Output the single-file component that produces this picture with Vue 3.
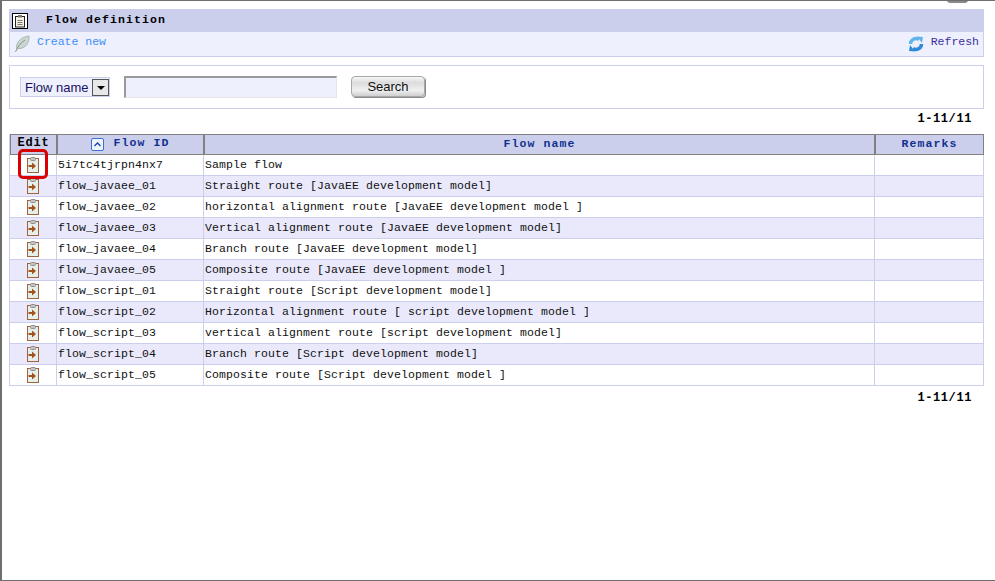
<script setup>
const rows = [
  ['5i7tc4tjrpn4nx7', 'Sample flow'],
  ['flow_javaee_01', 'Straight route [JavaEE development model]'],
  ['flow_javaee_02', 'horizontal alignment route [JavaEE development model ]'],
  ['flow_javaee_03', 'Vertical alignment route [JavaEE development model]'],
  ['flow_javaee_04', 'Branch route [JavaEE development model]'],
  ['flow_javaee_05', 'Composite route [JavaEE development model ]'],
  ['flow_script_01', 'Straight route [Script development model]'],
  ['flow_script_02', 'Horizontal alignment route [ script development model ]'],
  ['flow_script_03', 'vertical alignment route [script development model]'],
  ['flow_script_04', 'Branch route [Script development model]'],
  ['flow_script_05', 'Composite route [Script development model ]'],
]
</script>

<template>
  <div class="page">
    <div class="notch"></div>
    <div class="panel">
      <div class="title">
        <span class="title-icon">
          <svg width="14" height="14" viewBox="0 0 14 14">
            <rect x="2.500" y="2.500" width="9" height="10.500" fill="#f6f2e2" stroke="#222" />
            <rect x="5" y="1" width="4" height="2.500" fill="#777" />
            <path d="M4.500 6.500h5M4.500 8.500h5M4.500 10.500h5" stroke="#777" />
          </svg>
        </span>
        <span class="title-text">Flow definition</span>
      </div>
      <div class="toolbar">
        <a class="tool">
          <svg width="16" height="18" viewBox="0 0 16 18">
            <path d="M3 14C1.500 9 5 2.500 15 1c.5 6-3 12-9 12.500-1 .1-2 .2-3 .5z" fill="#ccd6d0" stroke="#a3b3a9" stroke-width=".9" />
            <path d="M1.500 17C3 13 6 8 11 5" stroke="#84968b" fill="none" stroke-width="1" />
          </svg>
          <span class="create">Create new</span>
        </a>
        <a class="tool">
          <svg width="16" height="16" viewBox="0 0 16 16">
            <path d="M2.500 8A5.500 5.500 0 0 1 11 3.500" fill="none" stroke="#62b4ea" stroke-width="3.500" />
            <path d="M9 .5L15 1l-1 6z" fill="#62b4ea" />
            <path d="M13.500 8A5.500 5.500 0 0 1 5 12.500" fill="none" stroke="#2e8ad8" stroke-width="3.500" />
            <path d="M7 15.500L1 15l1-6z" fill="#2e8ad8" />
          </svg>
          <span class="refresh">Refresh</span>
        </a>
      </div>
    </div>

    <div class="search">
      <div class="select">
        <span>Flow name</span>
        <span class="arrow"></span>
      </div>
      <input class="input" type="text" />
      <button class="btn" type="button">Search</button>
    </div>

    <div class="pager">1-11/11</div>

    <div class="table-wrap">
      <table class="grid">
        <colgroup>
          <col class="c1" />
          <col class="c2" />
          <col />
          <col class="c4" />
        </colgroup>
        <thead>
          <tr>
            <th class="edit-h">Edit</th>
            <th class="blue">
              <span class="sort">
                <svg width="9" height="9" viewBox="0 0 9 9"><path d="M1.500 6L4.500 3l3 3" fill="none" stroke="#1a3fa8" stroke-width="1.300" /></svg>
              </span>Flow ID
            </th>
            <th class="blue">Flow name</th>
            <th class="blue">Remarks</th>
          </tr>
        </thead>
        <tbody>
          <tr v-for="(r, i) in rows" :key="r[0]" :class="{ alt: i % 2 === 1 }">
            <td class="icon-cell">
              <svg class="clip" width="12" height="16" viewBox="0 0 12 16">
                <rect x=".5" y="1.500" width="11" height="14" fill="#e6efe9" stroke="#a0623a" />
                <rect x="3.500" y=".5" width="5" height="3" rx="1" fill="#c4c4c4" stroke="#8f8f8f" />
                <path d="M1.500 8h3.500V5.500L9 9l-4 3.500V10H1.500z" fill="#a4521c" />
              </svg>
            </td>
            <td>{{ r[0] }}</td>
            <td>{{ r[1] }}</td>
            <td></td>
          </tr>
        </tbody>
      </table>
      <div class="mark"></div>
    </div>

    <div class="pager bottom">1-11/11</div>
  </div>
</template>

<style scoped>
.page {
  position: relative;
  box-sizing: border-box;
  height: 581px;
  width: 995px;
  overflow: hidden;
  background: #fff;
  border-top: 1px solid #6f6f6f;
  border-left: 2px solid #6f6f6f;
  border-bottom: 1px solid #6f6f6f;
  padding: 8px 11px 0 7px;
  font-family: "Liberation Mono", "DejaVu Sans Mono", monospace;
  font-size: 11.500px;
  color: #111;
}
.notch {
  position: absolute;
  top: -1px;
  left: 945px;
  width: 21px;
  height: 3px;
  border-radius: 0 0 10px 10px;
  background: #8a8a8a;
}
.panel {
  border: 1px solid #cbcfeb;
  border-top: 0;
}
.title {
  height: 23px;
  background: #cbcfeb;
  display: flex;
  align-items: center;
  margin: 0 -1px;
  padding-left: 3px;
}
.title-icon {
  flex: none;
  width: 14px;
  height: 14px;
  border: 1px solid #000;
  background: #fff;
  display: flex;
  align-items: center;
  justify-content: center;
}
.title-text {
  margin-left: 18px;
  margin-bottom: 2px;
  font-weight: bold;
  letter-spacing: 1.100px;
  color: #000;
}
.toolbar {
  height: 24px;
  background: #eef0fe;
  display: flex;
  justify-content: space-between;
  align-items: center;
  padding: 0 4px 0 4px;
}
.tool {
  display: flex;
  align-items: center;
  gap: 7px;
}
.create {
  color: #3f8ff5;
  position: relative;
  top: -3px;
}
.refresh {
  color: #3d2f9a;
  position: relative;
  top: -3px;
}
.search {
  margin-top: 8px;
  height: 42px;
  border: 1px solid #cbcfeb;
  display: flex;
  align-items: center;
  padding: 0 0 0 10px;
  font-family: "Liberation Sans", Arial, sans-serif;
  font-size: 13px;
}
.select {
  box-sizing: border-box;
  width: 90px;
  height: 20px;
  border: 1px solid #cbcfeb;
  background: #eef0fe;
  display: flex;
  align-items: center;
  justify-content: space-between;
  padding: 0 0 0 4px;
  color: #1a1060;
  white-space: nowrap;
}
.arrow {
  box-sizing: border-box;
  flex: none;
  width: 17px;
  height: 17px;
  background: #e8e8e8;
  border: 1px solid #555;
  position: relative;
}
.arrow::after {
  content: "";
  position: absolute;
  left: 4px;
  top: 6px;
  border: 4px solid transparent;
  border-top: 4px solid #000;
  border-bottom: 0;
}
.input {
  box-sizing: border-box;
  flex: none;
  margin-left: 14px;
  width: 213px;
  height: 22px;
  border: 0;
  border-top: 2px solid #9a9a9a;
  border-left: 2px solid #9a9a9a;
  border-bottom: 1px solid #e6e6e6;
  border-right: 1px solid #e6e6e6;
  background: #eef0fe;
  padding: 0;
}
.btn {
  box-sizing: border-box;
  flex: none;
  margin: 0 0 1px 14px;
  width: 74px;
  height: 21px;
  border: 1px solid #a8a8a8;
  border-radius: 4px;
  background: linear-gradient(#f6f6f6, #dcdcdc 30%, #f0f0f0 70%, #cfcfcf);
  box-shadow: 1px 1px 0 #8a8a8a;
  font-family: "Liberation Sans", Arial, sans-serif;
  font-size: 13px;
  color: #111;
  padding: 0;
}
.pager {
  text-align: right;
  font-weight: bold;
  font-size: 12px;
  letter-spacing: .6px;
  line-height: 16px;
  margin-top: 2px;
  padding: 0 12px 0 0;
  color: #000;
}
.pager.bottom {
  margin-top: 4px;
}
.table-wrap {
  position: relative;
  margin: 7px 0 0 0;
}
.grid {
  width: 975px;
  table-layout: fixed;
  border-collapse: separate;
  border-spacing: 0;
  border-left: 1px solid #cbcfeb;
}
.c1 { width: 47px; }
.c2 { width: 147px; }
.c4 { width: 109px; }
th {
  box-sizing: border-box;
  height: 21px;
  background: #cbcfeb;
  border: 1px solid #808080;
  box-shadow: 1px 0 0 #fff;
  padding: 0 0 3px;
  font-weight: bold;
  font-size: 12px;
  letter-spacing: .8px;
  text-align: center;
  color: #000;
}
.blue {
  color: #12308f;
  font-size: 11.500px;
  letter-spacing: 1.100px;
}
.sort {
  display: inline-flex;
  align-items: center;
  justify-content: center;
  box-sizing: border-box;
  width: 13px;
  height: 13px;
  border: 1px solid #3f6fd0;
  border-radius: 2px;
  background: #eef4ff;
  margin-right: 9px;
  vertical-align: -3px;
}
td {
  box-sizing: border-box;
  height: 21px;
  padding: 0 0 2px 1px;
  border-right: 1px solid #cbcfeb;
  border-bottom: 1px solid #cbcfeb;
  background: #fff;
  white-space: pre;
  overflow: hidden;
  letter-spacing: .1px;
}
.alt td {
  background: #e9e9fb;
}
.icon-cell {
  padding: 0;
  text-align: center;
  line-height: 0;
}
.clip {
  vertical-align: middle;
}
.mark {
  position: absolute;
  left: 9px;
  top: 15px;
  box-sizing: border-box;
  width: 30px;
  height: 30px;
  border: 3px solid #d80000;
  border-radius: 5px;
}
</style>

<style>
html, body {
  margin: 0;
  background: #fff;
}
</style>
